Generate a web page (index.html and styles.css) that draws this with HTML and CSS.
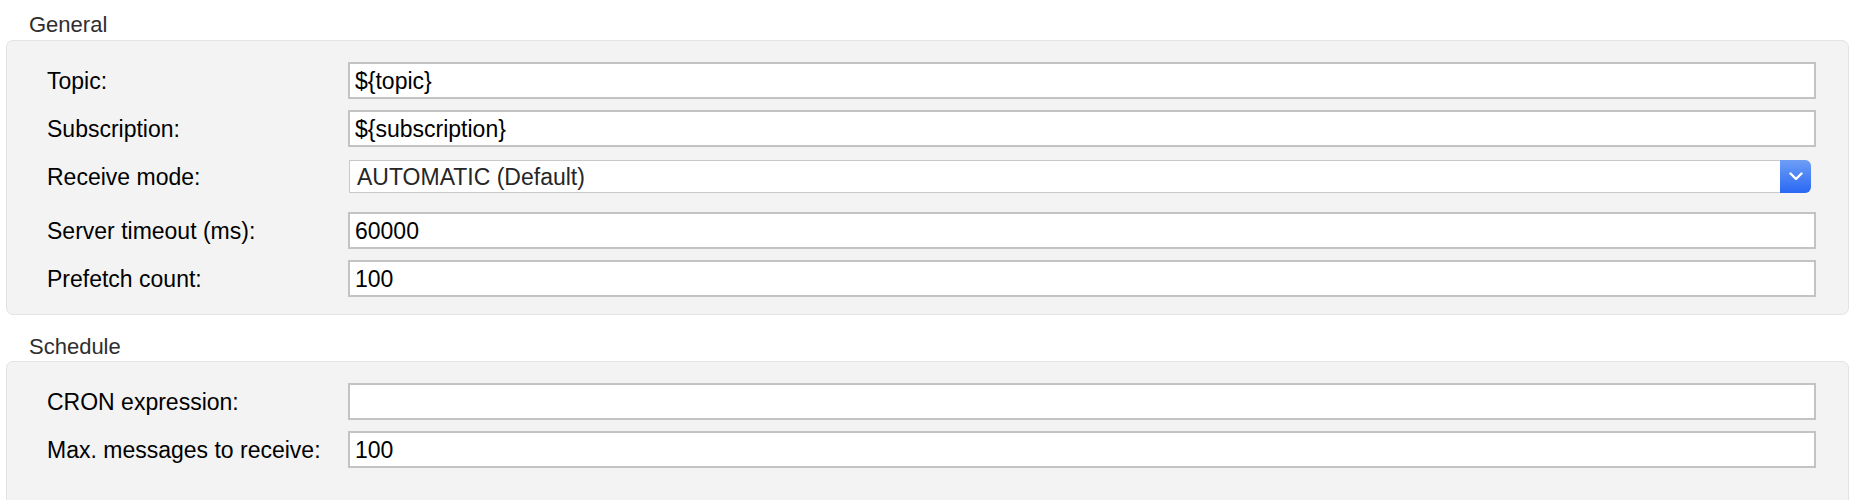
FILE: index.html
```html
<!DOCTYPE html>
<html>
<head>
<meta charset="utf-8">
<link rel="stylesheet" href="styles.css">
</head>
<body>
<section class="group">
  <div class="group-title">General</div>
  <div class="panel">
    <div class="row"><span class="label">Topic:</span><div class="field">${topic}</div></div>
    <div class="row"><span class="label">Subscription:</span><div class="field">${subscription}</div></div>
    <div class="row row-select"><span class="label">Receive mode:</span>
      <div class="select"><span class="select-text">AUTOMATIC (Default)</span>
        <span class="select-btn"><svg width="14" height="9" viewBox="0 0 14 9"><path d="M1.5 1.5 L7 7 L12.5 1.5" fill="none" stroke="#fff" stroke-width="2.4" stroke-linecap="round" stroke-linejoin="round"/></svg></span>
      </div>
    </div>
    <div class="row"><span class="label">Server timeout (ms):</span><div class="field">60000</div></div>
    <div class="row"><span class="label">Prefetch count:</span><div class="field">100</div></div>
  </div>
</section>
<section class="group group-second">
  <div class="group-title">Schedule</div>
  <div class="panel panel-open">
    <div class="row"><span class="label">CRON expression:</span><div class="field"></div></div>
    <div class="row"><span class="label">Max. messages to receive:</span><div class="field">100</div></div>
  </div>
</section>
</body>
</html>
```

FILE: styles.css
```css
html, body {
  margin: 0;
  padding: 0;
  background: #ffffff;
  font-family: "Liberation Sans", Arial, Helvetica, sans-serif;
  overflow: hidden;
}

.group-title {
  box-sizing: border-box;
  height: 40px;
  padding: 14px 0 4px 29px;
  font-size: 22px;
  line-height: 22px;
  color: #2e2e2e;
}

.group-second {
  margin-top: 2px;
}

.group-second .group-title {
  height: 44px;
  padding-top: 19px;
  padding-bottom: 3px;
}

.panel {
  margin: 0 7px 0 6px;
  background: #f3f3f3;
  border: 1px solid #e3e3e3;
  border-radius: 7px;
  padding: 21px 32px 17px 40px;
  display: flex;
  flex-direction: column;
  gap: 11px;
}

.panel-open {
  padding-bottom: 60px;
}

.row {
  display: grid;
  grid-template-columns: 301px 1fr;
  align-items: center;
}

.row-select {
  margin-top: 2px;
  margin-bottom: 8px;
}

.label {
  font-size: 23px;
  color: #000;
  line-height: 26px;
}

.field {
  box-sizing: border-box;
  height: 37px;
  border: 2px solid #c3c3c3;
  background: #ffffff;
  padding: 1px 5px 0;
  font-size: 23px;
  line-height: 33px;
  color: #000;
  white-space: nowrap;
  overflow: hidden;
}

.select {
  box-sizing: border-box;
  height: 33px;
  margin: 0 5px 0 1px;
  border: 1px solid #c9c9c9;
  border-right: none;
  border-radius: 0 6px 6px 0;
  background: #ffffff;
  display: flex;
  align-items: center;
}

.select-text {
  flex: 1;
  padding-left: 7px;
  padding-top: 2px;
  font-size: 23px;
  color: #262626;
  line-height: 29px;
}

.select-btn {
  align-self: stretch;
  margin: -1px 0;
  width: 31px;
  border-radius: 0 6px 6px 0;
  background: linear-gradient(#6d9ef6, #2a68f3);
  display: flex;
  align-items: center;
  justify-content: center;
}
```
